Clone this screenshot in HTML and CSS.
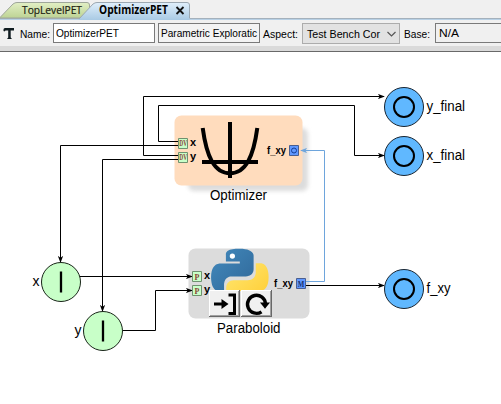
FILE: index.html
```html
<!DOCTYPE html>
<html lang="en">
<head>
<meta charset="utf-8">
<title>OptimizerPET</title>
<link rel="stylesheet" href="styles.css">
</head>
<body>
<nav class="tabs">
  <svg class="tabs-shape" viewBox="0 0 501 20" width="501" height="20">
    <defs>
      <linearGradient id="green" x1="0" y1="0" x2="0" y2="1"><stop offset="0" stop-color="#e2efc5"/><stop offset="1" stop-color="#bdd394"/></linearGradient>
      <linearGradient id="blue" x1="0" y1="0" x2="0" y2="1"><stop offset="0" stop-color="#e0effb"/><stop offset="1" stop-color="#a9cae4"/></linearGradient>
    </defs>
    <rect y="18" width="501" height="1" fill="#a5b1bc"/>
    <rect y="19" width="501" height="1" fill="#b7d0e5"/>
    <path d="M0 17.500L13 4Q15 2.500 17 2.500H87Q89.500 2.500 89.500 5V18H0Z" fill="url(#green)" stroke="#9fa79a"/>
    <path d="M79 19L93 4Q95 2.500 97 2.500H187Q189.500 2.500 189.500 5V20H78Z" fill="url(#blue)"/>
    <path d="M79 19L93 4Q95 2.500 97 2.500H187Q189.500 2.500 189.500 5V18" fill="none" stroke="#9ca8b2"/>
    <text class="tab" x="22" y="14" textLength="60" lengthAdjust="spacingAndGlyphs">TopLevelPET</text>
    <text class="tab tab-active" x="99" y="14" textLength="69" lengthAdjust="spacingAndGlyphs">OptimizerPET</text>
    <path d="M176.500 7L183.500 14M183.500 7L176.500 14" stroke="#111" stroke-width="1.800"/>
  </svg>
</nav>
<header class="toolbar">
  <svg class="type-icon" viewBox="0 0 12 13" width="12" height="13"><path d="M.5 4V2.500Q.5 1 2 1H11V3.500H7.700V10.500L9 12H4L5.200 10.500V3.500H2.500L1.500 4.500Z" fill="#101c20"/></svg>
  <svg class="label name-label" width="32" height="20"><text x="0" y="15" textLength="30" lengthAdjust="spacingAndGlyphs">Name:</text></svg>
  <div class="field name-field"><svg width="99" height="18"><text x="2" y="13" textLength="63" lengthAdjust="spacingAndGlyphs">OptimizerPET</text></svg></div>
  <div class="field kind-field"><svg width="100" height="18"><text x="2" y="13" textLength="96" lengthAdjust="spacingAndGlyphs">Parametric Exploratic</text></svg></div>
  <svg class="label aspect-label" width="37" height="20"><text x="0" y="15" textLength="35" lengthAdjust="spacingAndGlyphs">Aspect:</text></svg>
  <div class="select"><svg width="96" height="19"><text x="4" y="14" textLength="73" lengthAdjust="spacingAndGlyphs">Test Bench Cor</text><path d="M84.500 8L88.500 12L92.500 8" fill="none" stroke="#555" stroke-width="1.200"/></svg></div>
  <svg class="label base-label" width="28" height="20"><text x="0" y="15" textLength="26" lengthAdjust="spacingAndGlyphs">Base:</text></svg>
  <div class="field base-field"><svg width="66" height="18"><text x="3" y="12.500" textLength="20" lengthAdjust="spacingAndGlyphs">N/A</text></svg></div>
</header>
<div class="divider"></div>
<main>
<svg class="canvas" viewBox="0 52 501 352" width="501" height="352">
  <defs>
    <filter id="soft" x="-10%" y="-10%" width="120%" height="130%"><feGaussianBlur stdDeviation="2"/></filter>
    <marker id="arrow" viewBox="0 0 8 6" markerWidth="7" markerHeight="5.250" refX="7" refY="3" orient="auto" markerUnits="userSpaceOnUse"><path d="M0 0L8 3L0 6L2 3Z"/></marker>
    <marker id="arrow-blue" viewBox="0 0 8 6" markerWidth="7" markerHeight="5.250" refX="7" refY="3" orient="auto" markerUnits="userSpaceOnUse"><path d="M0 0L8 3L0 6L2 3Z" fill="#6ea5dc"/></marker>
    <linearGradient id="py-blue" x1="0" y1="0" x2="1" y2="1"><stop offset="0" stop-color="#438abd"/><stop offset="1" stop-color="#2f6798"/></linearGradient>
    <linearGradient id="py-yellow" x1="0" y1="0" x2="1" y2="1"><stop offset="0" stop-color="#ffe873"/><stop offset="1" stop-color="#ffcc32"/></linearGradient>
    <g id="button"><path d="M0 0H31V27H0Z" fill="#686868"/><path d="M0 0H30V26H0Z" fill="#fff"/><path d="M1 1H30V26H1Z" fill="#a0a0a0"/><path d="M1 1H29V25H1Z" fill="#f0f0f0"/></g>
  </defs>

  <rect x="188" y="128" width="120" height="63" rx="6" fill="#dcdcdc" filter="url(#soft)"/>
  <rect x="174.500" y="115.500" width="128" height="70" rx="7" fill="#ffdcbd"/>
  <rect x="188.500" y="248.500" width="121" height="70" rx="7" fill="#dcdcdc"/>

  <path d="M202.700 128C206.500 156 214 173.300 230 173.300S253.500 156 257.300 128" fill="none" stroke="#000" stroke-width="4"/>
  <path d="M230 122V178M202 162H258" stroke="#000" stroke-width="4"/>

  <g transform="translate(211.200 248.700) scale(2.380)">
    <path fill="url(#py-blue)" d="M14.250.18l.9.200.73.260.59.300.45.320.34.340.25.340.16.330.1.300.04.260.02.200-.01.130V8.500l-.05.630-.13.550-.21.460-.26.380-.3.310-.33.250-.35.190-.35.140-.33.100-.3.070-.26.040-.21.020H8.770l-.69.050-.59.140-.5.220-.41.270-.33.320-.27.350-.2.360-.15.370-.1.350-.07.320-.04.270-.02.210v3.060H3.170l-.21-.03-.28-.07-.32-.12-.35-.18-.36-.26-.36-.36-.35-.46-.32-.59-.28-.73-.21-.88-.14-1.050-.05-1.230.06-1.220.16-1.040.24-.87.32-.71.36-.57.4-.44.42-.33.42-.24.4-.16.36-.1.32-.05.24-.01h.16l.06.010h8.160v-.83H6.180l-.01-2.750-.02-.37.05-.34.11-.31.17-.28.25-.26.31-.23.38-.2.44-.18.51-.15.58-.12.64-.1.710-.06.77-.04.84-.02 1.270.05z"/>
    <circle cx="8.900" cy="3.100" r="1.100" fill="#fff"/>
    <path fill="url(#py-yellow)" d="M21.100 6.110l.28.060.32.120.35.180.36.270.36.350.35.470.32.590.28.730.21.880.14 1.040.05 1.230-.06 1.230-.16 1.040-.24.860-.32.710-.36.570-.4.450-.42.330-.42.240-.4.160-.36.090-.32.050-.24.020-.16-.01H12v4H6.300V16.400l.05-.64.13-.54.21-.46.26-.38.3-.32.33-.24.35-.2.35-.14.33-.1.3-.06.26-.04.21-.02.13-.01h5.840l.69-.05.59-.14.5-.21.41-.28.33-.32.27-.35.2-.36.15-.36.1-.35.07-.32.04-.28.02-.21V6.070z"/>
  </g>
  <use href="#button" x="209" y="290"/>
  <use href="#button" x="241" y="290"/>
  <path d="M214 304H223" stroke="#000" stroke-width="3"/><path d="M221.500 299L228.500 304L221.500 309Z"/>
  <path d="M228.500 295H234.500V313.500H228.500" fill="none" stroke="#000" stroke-width="3"/>
  <path d="M261.500 311.800A9 9 0 1 1 265.500 304" fill="none" stroke="#000" stroke-width="3.400"/><path d="M260 302.500H270L265 308.700Z"/>

  <g class="wire">
    <path d="M178 155.500H143.500V96.500H384" marker-end="url(#arrow)"/>
    <path d="M178 141.500H158.500V105.500H354.500V155.500H384" marker-end="url(#arrow)"/>
    <path d="M178 145.500H60.500V262" marker-end="url(#arrow)"/>
    <path d="M178 159.500H102.500V311" marker-end="url(#arrow)"/>
    <path d="M80 276.500H192" marker-end="url(#arrow)"/>
    <path d="M123 330.500H155.500V290.500H192" marker-end="url(#arrow)"/>
    <path d="M306 285.500H384" marker-end="url(#arrow)"/>
    <path class="blue-wire" d="M306 281.500H324.500V150.500H301" marker-end="url(#arrow-blue)"/>
  </g>

  <g fill="#c8ffc8" stroke="#6f916f"><path d="M178.500 138.500h9v10h-9zM178.500 152.500h9v10h-9zM192.500 271.500h9v10h-9zM192.500 285.500h9v10h-9z"/></g>
  <g class="port-code">
    <text x="179.300" y="146.300" textLength="7.800" lengthAdjust="spacingAndGlyphs">DV</text><text x="179.300" y="160.300" textLength="7.800" lengthAdjust="spacingAndGlyphs">DV</text>
    <text x="194.500" y="279.500">P</text><text x="194.500" y="293.500">P</text>
  </g>
  <g fill="#6098ff" stroke="#4a5f91"><path d="M289.500 145.500h9v10h-9zM296.500 278.500h9v10h-9z"/></g>
  <circle cx="294" cy="150.500" r="2.500" fill="none" stroke="#173d94"/>
  <text class="port-code m-code" x="297.800" y="286.500" textLength="6.500" lengthAdjust="spacingAndGlyphs">M</text>
  <g class="port-name">
    <text x="190" y="146">x</text><text x="190" y="160">y</text>
    <text x="204" y="279">x</text><text x="204" y="293">y</text>
    <text x="267" y="153.500" textLength="19" lengthAdjust="spacingAndGlyphs">f_xy</text>
    <text x="274" y="286.500" textLength="19" lengthAdjust="spacingAndGlyphs">f_xy</text>
  </g>

  <g class="outputs"><circle cx="404" cy="107" r="19.500"/><circle cx="404" cy="156" r="19.500"/><circle cx="404" cy="289" r="19.500"/></g>
  <g class="rings"><circle cx="404" cy="107" r="10"/><circle cx="404" cy="156" r="10"/><circle cx="404" cy="289" r="10"/></g>
  <g class="inputs"><circle cx="61" cy="282" r="19.500"/><circle cx="103" cy="331" r="19.500"/></g>
  <path d="M61 271.500V292.500M103 320.500V341.500" stroke="#000" stroke-width="2.300"/>

  <g class="node-name">
    <text x="426.500" y="111" textLength="38.500" lengthAdjust="spacingAndGlyphs">y_final</text>
    <text x="426.500" y="160" textLength="38.500" lengthAdjust="spacingAndGlyphs">x_final</text>
    <text x="426.500" y="293" textLength="24" lengthAdjust="spacingAndGlyphs">f_xy</text>
    <text x="32.500" y="286">x</text><text x="74.500" y="335">y</text>
    <text x="210" y="200" textLength="57" lengthAdjust="spacingAndGlyphs">Optimizer</text>
    <text x="217" y="333" textLength="63.500" lengthAdjust="spacingAndGlyphs">Paraboloid</text>
  </g>
</svg>
</main>
</body>
</html>
```
FILE: styles.css
```css
* { box-sizing: border-box; }
body { margin: 0; width: 501px; height: 404px; overflow: hidden; background: #fff; font-family: "Liberation Sans", Arial, sans-serif; }
svg { display: block; flex: none; }
.tabs { height: 20px; background: #f0f0f0; }
.tab { font: 11.5px "Open Sans", "Noto Sans", sans-serif; fill: #202010; stroke: #202010; stroke-width: .2px; }
.tab-active { font-weight: 700; fill: #000; stroke: none; }
.toolbar { display: flex; height: 26px; padding: 3px 0 0 3px; background: #f0f0f0; font-size: 11.5px; }
.toolbar svg { overflow: visible; }
.type-icon { margin-top: 4px; }
.name-label { margin-left: 5px; }
.field { flex: none; height: 20px; border: 1px solid #7a7a7a; }
.name-field { width: 102px; margin-left: 1px; background: #fff; }
.kind-field { width: 102px; margin-left: 3px; background: #f3f3f3; }
.aspect-label { margin-left: 3px; }
.select { flex: none; width: 98px; height: 21px; margin-left: 2px; border: 1px solid #acacac; background: #e2e2e2; }
.base-label { margin-left: 4px; }
.base-field { width: 68px; margin-left: 3px; border-right: 0; background: #f0f0f0; }
.divider { height: 6px; background: #dadada; border-bottom: 1px solid #696969; }
.wire { fill: none; stroke: #000; }
.wire .blue-wire { stroke: #6ea5dc; }
marker path { stroke: none; }
.port-code { font: bold 8px "Liberation Serif", serif; fill: #8b4434; }
.m-code { fill: #173070; }
.port-name { font-size: 11px; font-weight: 700; }
.node-name { font-size: 14px; }
.outputs { fill: #60b8ff; stroke: #182430; }
.rings { fill: none; stroke: #000; stroke-width: 2; }
.inputs { fill: #c8ffc8; stroke: #182418; }
```
